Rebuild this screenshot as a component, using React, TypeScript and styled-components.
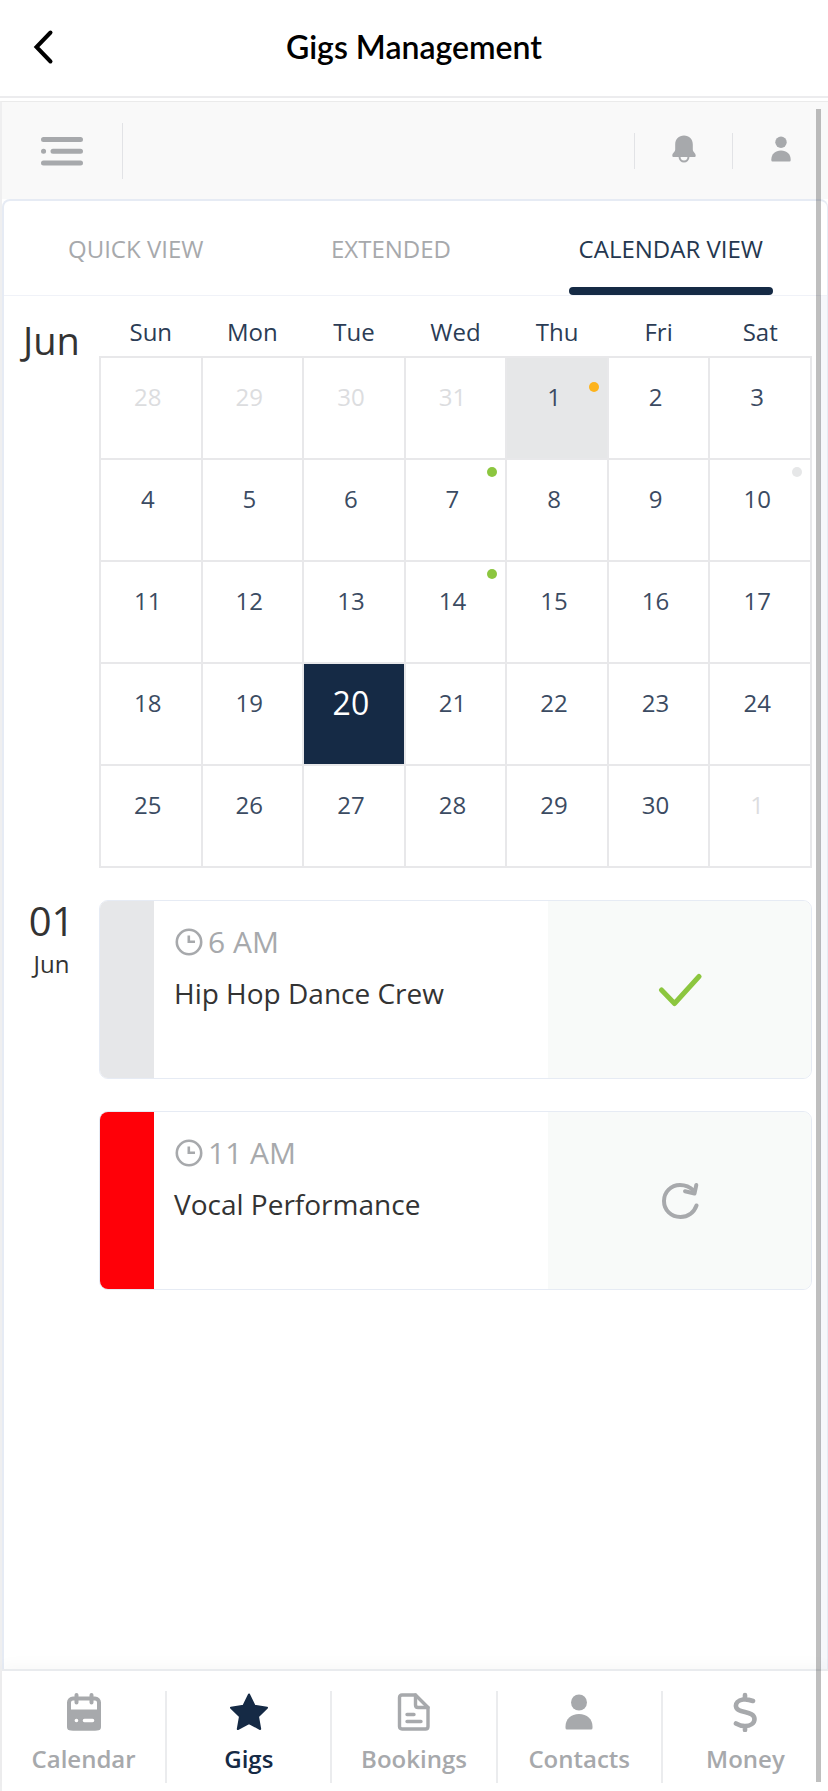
import React from "react";
import styled, { createGlobalStyle } from "styled-components";

const NAVY = "#152a45";
const GREY = "#a7a9ac";
const RULE = "#e8e8ea";
const CARD_RULE = "#e6ebf4";
const GREEN = "#8cc63f";

const GlobalStyle = createGlobalStyle`
  *, *::before, *::after { box-sizing: border-box; }
  html, body { margin: 0; background: #fff; }
  body { font-family: "Open Sans", "Noto Sans", sans-serif; color: #333; }
  button { font: inherit; color: inherit; background: none; border: 0; padding: 0; cursor: pointer; }
  h1, h2, p, time { margin: 0; font-weight: 400; }
  svg { display: block; }
`;

const Page = styled.div`
  display: flex;
  flex-direction: column;
  min-height: 100vh;
`;

const TitleBar = styled.header`
  display: grid;
  grid-template-columns: 64px 1fr 64px;
  align-items: center;
  height: 98px;
  padding: 0 12px 2px;
  border-bottom: 2px solid #ececee;
`;

const BackButton = styled.button`
  display: flex;
  justify-content: center;
`;

const Title = styled.h1`
  font-family: Lato, sans-serif;
  font-size: 32px;
  line-height: 40px;
  font-weight: 600;
  color: #000;
  text-align: center;
`;

const Frame = styled.div`
  position: relative;
  flex: 1;
  display: flex;
  flex-direction: column;
  margin-top: 3px;
  border-top: 1px solid #ebebeb;
  border-left: 2px solid #efeff0;
`;

const Toolbar = styled.div`
  display: flex;
  align-items: center;
  height: 97px;
  padding-right: 20px;
  background: #f9f9f9;
`;

const MenuButton = styled.button`
  display: flex;
  align-items: center;
  width: 121px;
  height: 56px;
  padding-left: 38px;
  border-right: 1px solid #e2e3e6;
`;

const ToolbarActions = styled.div`
  display: flex;
  margin-left: auto;
`;

const ToolbarAction = styled.button`
  display: flex;
  justify-content: center;
  align-items: center;
  width: 98px;
  height: 36px;
  padding-bottom: 3px;
  border-left: 1px solid #e2e3e6;
  &:last-child { width: 76px; padding-left: 20px; }
`;

const Card = styled.main`
  flex: 1;
  display: flex;
  flex-direction: column;
  border: 1px solid ${CARD_RULE};
  border-width: 2px 1px 0 2px;
  border-radius: 8px 8px 0 0;
  background: #fff;
`;

const Tabs = styled.nav`
  display: flex;
  justify-content: space-between;
  height: 95px;
  padding: 0 54px;
  border-bottom: 1px solid #f0f2f8;
`;

const Tab = styled.button<{ $active?: boolean }>`
  position: relative;
  padding: 2px 10px 0;
  font-size: 24px;
  line-height: 32px;
  color: ${(p) => (p.$active ? "#24374f" : GREY)};

  &::after {
    content: "";
    position: absolute;
    left: 0;
    right: 0;
    bottom: 0;
    height: 8px;
    border-radius: 4px;
    background: ${(p) => (p.$active ? NAVY : "transparent")};
  }
`;

const Content = styled.div`
  flex: 1;
  display: flex;
  flex-direction: column;
  gap: 32px;
  margin-right: 6px;
  padding: 15px 8px 32px 0;
  border-right: 1px solid #f5f6fb;
  box-shadow: 6px 0 0 #f6f7fb;
`;

const Section = styled.section`
  display: grid;
  grid-template-columns: 95px 1fr;
`;

const Month = styled.h2`
  font-size: 38px;
  line-height: 58px;
  text-align: center;
`;

const MonthGrid = styled.table`
  width: 100%;
  table-layout: fixed;
  border-collapse: collapse;
`;

const Weekday = styled.th`
  height: 46px;
  padding: 0 0 3px;
  font-size: 24px;
  line-height: 32px;
  font-weight: 400;
  color: #2b3c55;
`;

const Day = styled.td<{ $tone?: "muted" | "event" | "selected" }>`
  height: 102px;
  padding: 0;
  border: 2px solid ${RULE};
  vertical-align: top;
  background: ${(p) =>
    p.$tone === "selected" ? NAVY : p.$tone === "event" ? "#e6e7e8" : "#fff"};
`;

const DayButton = styled.button<{ $tone?: "muted" | "event" | "selected" }>`
  position: relative;
  display: block;
  width: 100%;
  height: 100px;
  padding: 0 6px 22px 0;
  font-size: ${(p) => (p.$tone === "selected" ? 32 : 24)}px;
  line-height: 32px;
  color: ${(p) =>
    p.$tone === "selected" ? "#fff" : p.$tone === "muted" ? "#dcdddf" : "#3b4b62"};
`;

const Dot = styled.span<{ $color: string; $low?: boolean }>`
  position: absolute;
  top: ${(p) => (p.$low ? 24 : 7)}px;
  right: 8px;
  width: 10px;
  height: 10px;
  border-radius: 50%;
  background: ${(p) => p.$color};
`;

const AgendaDate = styled.time`
  display: flex;
  flex-direction: column;
  align-items: center;
  font-size: 24px;
  line-height: 44px;
`;

const AgendaDay = styled.span`
  font-size: 40px;
  line-height: 42px;
`;

const Events = styled.div`
  display: flex;
  flex-direction: column;
  gap: 32px;
`;

const Event = styled.article`
  display: grid;
  grid-template-columns: 54px 1fr 263px;
  height: 179px;
  border: 1px solid ${CARD_RULE};
  border-radius: 9px;
  overflow: hidden;
`;

const Stripe = styled.div<{ $color: string }>`
  background: ${(p) => p.$color};
`;

const EventBody = styled.div`
  padding: 20px;
`;

const EventTime = styled.p`
  display: flex;
  align-items: center;
  gap: 4px;
  font-size: 30px;
  line-height: 42px;
  color: ${GREY};
`;

const EventName = styled.p`
  font-size: 28px;
  line-height: 60px;
  white-space: nowrap;
`;

const EventStatus = styled.button`
  display: flex;
  justify-content: center;
  align-items: center;
  background: #f8faf9;
`;

const BottomNav = styled.nav`
  display: grid;
  grid-template-columns: repeat(5, 1fr);
  height: 122px;
  padding: 20px 0 8px;
  border-top: 2px solid #e9ebee;
  background: #fff;
  box-shadow: 0 -4px 14px rgba(0, 0, 0, 0.03);
`;

const NavItem = styled.a<{ $active?: boolean }>`
  display: flex;
  flex-direction: column;
  align-items: center;
  gap: 11px;
  padding-top: 1px;
  border-right: 2px solid #ebecee;
  font-size: 24px;
  line-height: 32px;
  font-weight: 600;
  text-decoration: none;
  color: ${(p) => (p.$active ? NAVY : GREY)};
  &:last-child { border-right: 0; }
`;

const ScrollThumb = styled.div`
  position: absolute;
  top: 7px;
  right: 7px;
  bottom: 9px;
  width: 5px;
  background: rgba(0, 0, 0, 0.25);
`;

const ChevronIcon = () => (
  <svg width="24" height="36" viewBox="0 0 24 36" fill="none" stroke="#000" strokeWidth="4" strokeLinecap="round">
    <path d="M18.500 3.500 4.500 18 18.500 32.500" />
  </svg>
);

const MenuIcon = () => (
  <svg width="44" height="32" viewBox="0 0 44 32" stroke={GREY} strokeWidth="5" strokeLinecap="round">
    <path d="M3.500 4.500H40.500M3.500 16.300H3.600M13 16.300H40.500M3.500 28H40.500" />
  </svg>
);

const BellIcon = () => (
  <svg width="24" height="28" viewBox="0 0 24 28" fill={GREY}>
    <path d="M12 .5C6.800.5 3.200 4.200 3.200 9.500V14.500C3.200 17 .3 18 .3 20.500C.3 21.500 .8 22 1.800 22H22.200C23.200 22 23.700 21.500 23.700 20.500C23.700 18 20.800 17 20.800 14.500V9.500C20.800 4.200 17.200.5 12 .5Z" />
    <path d="M7.500 21.500C7.500 28 16.500 28 16.500 21.500" fill="none" stroke={GREY} strokeWidth="2" />
  </svg>
);

const PersonIcon = ({ width, height }: { width: number; height: number }) => (
  <svg width={width} height={height} viewBox="0 0 28 36" fill={GREY}>
    <circle cx="14" cy="8.500" r="8" />
    <path d="M.5 34V32.500C.5 25 6 20 14 20S27.500 25 27.500 32.500V34Q27.500 35.500 26 35.500H2Q.5 35.500 .5 34Z" />
  </svg>
);

const ClockIcon = () => (
  <svg width="30" height="30" viewBox="0 0 30 30" fill="none" stroke={GREY} strokeWidth="2.600">
    <circle cx="15" cy="15" r="12.200" />
    <path d="M14.800 8.500V14.800H21" />
  </svg>
);

const CheckIcon = () => (
  <svg width="44" height="34" viewBox="0 0 44 34" fill="none" stroke={GREEN} strokeWidth="5" strokeLinecap="round" strokeLinejoin="round">
    <path d="M3.500 17 16.500 30.500 41 3.500" />
  </svg>
);

const RetryIcon = () => (
  <svg width="38" height="38" viewBox="0 0 38 38" fill="none" stroke={GREY} strokeWidth="4" strokeLinecap="round">
    <path d="M35.500 23.500C33 30.500 27 35 19.500 35C10 35 3 28 3 19S10 3 19 3C25 3 29 5 32.500 8.500" />
    <path d="M35.300 3 33.500 11.500 24 9.200" strokeLinejoin="round" />
  </svg>
);

const CalendarIcon = () => (
  <svg width="36" height="40" viewBox="0 0 36 40" fill="none" stroke={GREY} strokeLinecap="round">
    <rect x="3" y="6.500" width="30" height="30" rx="4" strokeWidth="4" />
    <path d="M3 19.500H33V35Q33 36.500 31 36.500H5Q3 36.500 3 35Z" fill={GREY} strokeWidth="4" />
    <path d="M10.500 3V10.500M25.500 3V10.500" strokeWidth="4" />
    <path d="M10.400 28.500H10.500M18.500 28.500H26.500" stroke="#fff" strokeWidth="3.600" />
  </svg>
);

const StarIcon = () => (
  <svg width="40" height="40" viewBox="0 0 40 40" fill={NAVY} stroke={NAVY} strokeWidth="2" strokeLinejoin="round">
    <path d="M20 2.500 25.500 13.800 38 15.700 29 24.500 31.200 37 20 31 8.800 37 11 24.500 2 15.700 14.500 13.800Z" />
  </svg>
);

const DocumentIcon = () => (
  <svg width="34" height="40" viewBox="0 0 34 40" fill="none" stroke={GREY} strokeWidth="3.400" strokeLinecap="round" strokeLinejoin="round">
    <path d="M5 3H18.500L31 15.500V34.500Q31 37 28.500 37H5Q2.500 37 2.500 34.500V5.500Q2.500 3 5 3Z" />
    <path d="M18.500 3V13Q18.500 15.500 21 15.500H31M10 22.500H17M10 29.500H24" />
  </svg>
);

const DollarIcon = () => (
  <svg width="26" height="40" viewBox="0 0 26 40" fill="none" stroke={GREY} strokeWidth="4.600" strokeLinecap="round">
    <path d="M13 3V7M13 34V38M21 9C17 7.500 14 7 11 7.500C6 8.300 3.500 11 4 14.500C5 22 22.500 18 22.500 27C22.500 31.500 18 34 13 34C9.500 34 6.500 33 4 31.500" />
  </svg>
);

const WEEKDAYS = ["Sun", "Mon", "Tue", "Wed", "Thu", "Fri", "Sat"];

// The grid opens on 28 May; each row holds one week.
const WEEKS: number[][] = [
  [28, 29, 30, 31, 1, 2, 3],
  [4, 5, 6, 7, 8, 9, 10],
  [11, 12, 13, 14, 15, 16, 17],
  [18, 19, 20, 21, 22, 23, 24],
  [25, 26, 27, 28, 29, 30, 1],
];

const DOTS: Record<number, string> = { 1: "#fdb31c", 7: GREEN, 10: "#e6e7e8", 14: GREEN };

const EVENTS = [
  { time: "6 AM", name: "Hip Hop Dance Crew", color: "#e6e7e9", status: "Confirmed", icon: <CheckIcon /> },
  { time: "11 AM", name: "Vocal Performance", color: "#ff0008", status: "Retry", icon: <RetryIcon /> },
];

const NAV = [
  { label: "Calendar", icon: <CalendarIcon /> },
  { label: "Gigs", icon: <StarIcon />, active: true },
  { label: "Bookings", icon: <DocumentIcon /> },
  { label: "Contacts", icon: <PersonIcon width={28} height={40} /> },
  { label: "Money", icon: <DollarIcon /> },
];

export default function App() {
  return (
    <Page>
      <GlobalStyle />
      <TitleBar>
        <BackButton aria-label="Back">
          <ChevronIcon />
        </BackButton>
        <Title>Gigs Management</Title>
      </TitleBar>
      <Frame>
        <Toolbar>
          <MenuButton aria-label="Menu">
            <MenuIcon />
          </MenuButton>
          <ToolbarActions>
            <ToolbarAction aria-label="Notifications">
              <BellIcon />
            </ToolbarAction>
            <ToolbarAction aria-label="Profile">
              <PersonIcon width={20} height={26} />
            </ToolbarAction>
          </ToolbarActions>
        </Toolbar>
        <Card>
          <Tabs>
            <Tab>QUICK VIEW</Tab>
            <Tab>EXTENDED</Tab>
            <Tab $active>CALENDAR VIEW</Tab>
          </Tabs>
          <Content>
            <Section>
              <Month>Jun</Month>
              <MonthGrid>
                <thead>
                  <tr>
                    {WEEKDAYS.map((d) => (
                      <Weekday key={d} scope="col">{d}</Weekday>
                    ))}
                  </tr>
                </thead>
                <tbody>
                  {WEEKS.map((week, w) => (
                    <tr key={w}>
                      {week.map((day, d) => {
                        const outside = (w === 0 && day > 20) || (w === 4 && day < 20);
                        const tone = outside
                          ? "muted"
                          : day === 1
                            ? "event"
                            : day === 20
                              ? "selected"
                              : undefined;
                        return (
                          <Day key={d} $tone={tone}>
                            <DayButton $tone={tone}>
                              {day}
                              {!outside && DOTS[day] && <Dot $color={DOTS[day]} $low={tone === "event"} />}
                            </DayButton>
                          </Day>
                        );
                      })}
                    </tr>
                  ))}
                </tbody>
              </MonthGrid>
            </Section>
            <Section>
              <AgendaDate>
                <AgendaDay>01</AgendaDay>
                Jun
              </AgendaDate>
              <Events>
                {EVENTS.map((e) => (
                  <Event key={e.name}>
                    <Stripe $color={e.color} />
                    <EventBody>
                      <EventTime>
                        <ClockIcon />
                        {e.time}
                      </EventTime>
                      <EventName>{e.name}</EventName>
                    </EventBody>
                    <EventStatus aria-label={e.status}>{e.icon}</EventStatus>
                  </Event>
                ))}
              </Events>
            </Section>
          </Content>
        </Card>
        <BottomNav>
          {NAV.map((n) => (
            <NavItem key={n.label} href="#" $active={n.active}>
              {n.icon}
              {n.label}
            </NavItem>
          ))}
        </BottomNav>
        <ScrollThumb />
      </Frame>
    </Page>
  );
}
